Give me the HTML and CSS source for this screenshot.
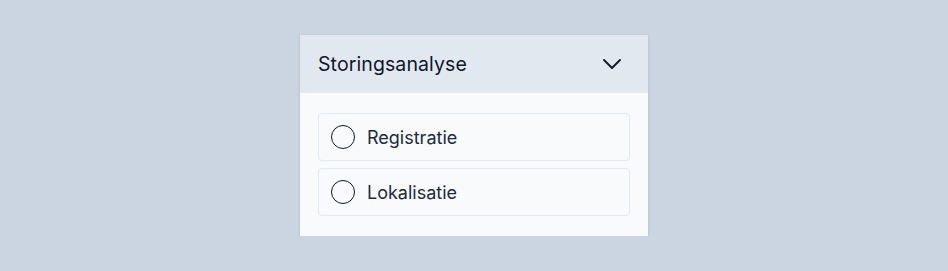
FILE: index.html
```html
<!DOCTYPE html>
<html lang="nl">
<head>
    <meta charset="UTF-8">
    <meta name="viewport" content="width=device-width, initial-scale=1.0">
    <title>Storingsanalyse</title>
    <link rel="stylesheet" href="styles.css">
</head>
<body>
    <div class="panel">
        <div class="panel-head">
            <span class="panel-title">Storingsanalyse</span>
            <svg class="chevron" width="22" height="22" viewBox="0 0 22 22" fill="none" stroke="#0f172a" stroke-width="1.9" stroke-linecap="round" stroke-linejoin="round">
                <path d="M3 7l8 8 8-8"/>
            </svg>
        </div>
        <div class="panel-body">
            <label class="option">
                <span class="radio"></span>
                <span class="option-text">Registratie</span>
            </label>
            <label class="option">
                <span class="radio"></span>
                <span class="option-text">Lokalisatie</span>
            </label>
        </div>
    </div>
</body>
</html>
```

FILE: styles.css
```css
body {
    margin: 0;
    background: #cbd5e1;
    font-family: Inter, "Noto Sans", sans-serif;
    color: #0f172a;
}
.panel {
    width: 348px;
    margin: 35px auto 0;
    background: #f8fafc;
    box-shadow: 0 1px 3px rgba(15, 23, 42, 0.15);
}
.panel-head {
    height: 58px;
    padding: 0 25px 0 18px;
    background: #e2e8f0;
    display: flex;
    align-items: center;
    justify-content: space-between;
}
.panel-title {
    font-size: 19.5px;
    letter-spacing: 0.1px;
}
.panel-body {
    padding: 20px 18px 20px;
    display: flex;
    flex-direction: column;
    gap: 7px;
}
.option {
    height: 48px;
    box-sizing: border-box;
    border: 1px solid #e2e8f0;
    border-radius: 4px;
    padding: 0 12px;
    display: flex;
    align-items: center;
    gap: 12px;
}
.radio {
    width: 24px;
    height: 24px;
    box-sizing: border-box;
    border: 1.5px solid #0f172a;
    border-radius: 50%;
}
.option-text {
    font-size: 18px;
    color: #1e293b;
}
```
